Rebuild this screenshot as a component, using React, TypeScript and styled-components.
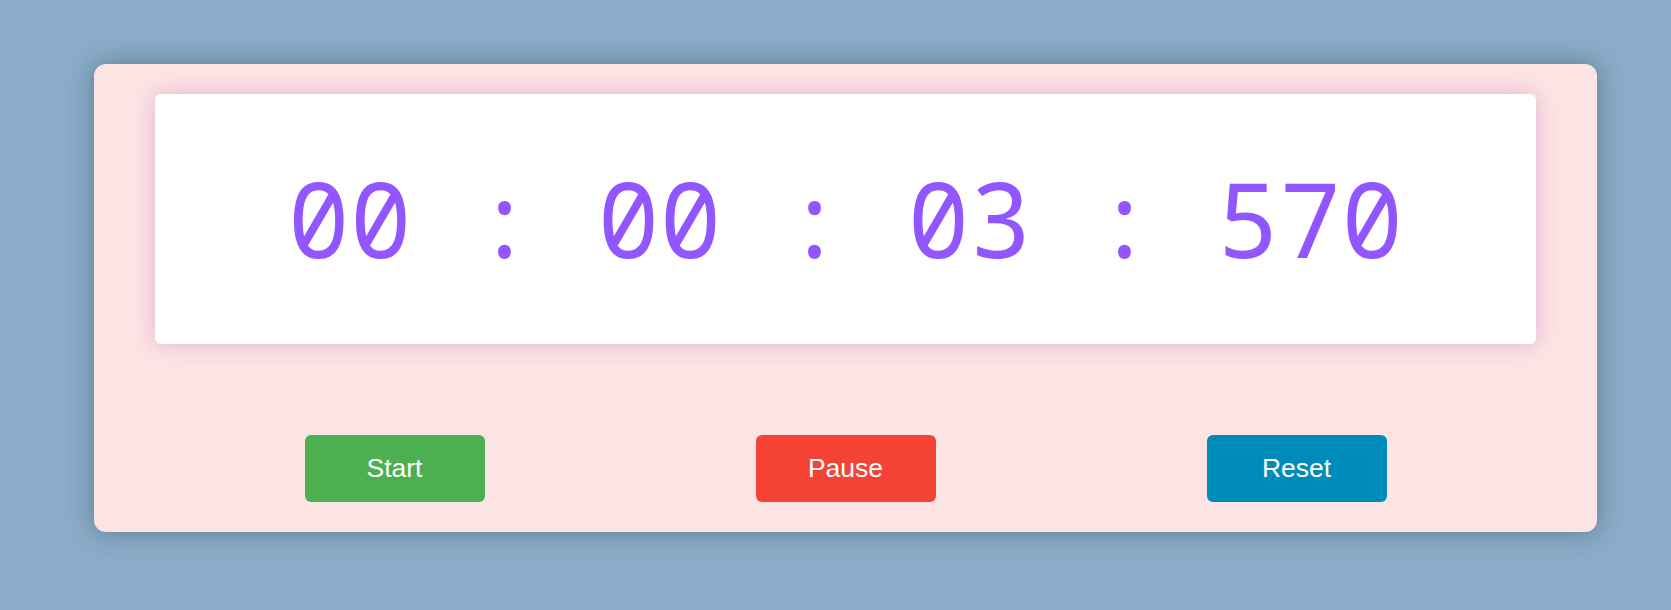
import React from "react";
import styled, { createGlobalStyle } from "styled-components";

const Global = createGlobalStyle`
  html, body {
    margin: 0;
    padding: 0;
    background: #8aacc8;
  }
  body {
    font-family: "Liberation Sans", Arial, sans-serif;
  }
`;

const Page = styled.div`
  display: flex;
  align-items: flex-start;
  padding: 64px 0 0 94px;
  min-height: 610px;
  box-sizing: border-box;
`;

const Card = styled.div`
  width: 1503px;
  box-sizing: border-box;
  padding: 30px 61px;
  background: #fde4e4;
  border-radius: 12px;
  box-shadow: 0 0 24px rgba(40, 60, 80, 0.45);
  display: flex;
  flex-direction: column;
`;

const Display = styled.div`
  height: 250px;
  background: #ffffff;
  border-radius: 6px;
  box-shadow: 0 0 22px rgba(190, 120, 190, 0.45);
  display: flex;
  align-items: center;
  justify-content: center;
`;

const Time = styled.span`
  font-family: "Noto Sans Mono", "DejaVu Sans Mono", monospace;
  font-size: 103.3px;
  color: #9156ff;
  white-space: pre;
  margin-top: -2px;
`;

const ButtonRow = styled.div`
  margin-top: 91px;
  padding: 0 14px;
  display: flex;
  justify-content: space-around;
`;

const Button = styled.button<{ $bg: string }>`
  width: 180px;
  height: 67px;
  border: none;
  border-radius: 6px;
  background: ${(p) => p.$bg};
  color: #ffffff;
  font-family: "Liberation Sans", Arial, sans-serif;
  font-size: 26.5px;
  cursor: pointer;
`;

export default function App() {
  return (
    <>
      <Global />
      <Page>
        <Card>
          <Display>
            <Time>00 : 00 : 03 : 570</Time>
          </Display>
          <ButtonRow>
            <Button $bg="#4caf50">Start</Button>
            <Button $bg="#f44336">Pause</Button>
            <Button $bg="#008cba">Reset</Button>
          </ButtonRow>
        </Card>
      </Page>
    </>
  );
}
